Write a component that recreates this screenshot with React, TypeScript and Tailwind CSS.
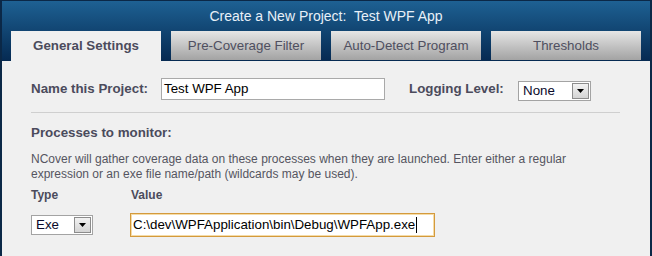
import React from "react";

const font = "font-['Liberation_Sans',Arial,sans-serif]";

const tabs = ["General Settings", "Pre-Coverage Filter", "Auto-Detect Program", "Thresholds"];

const SelectBox = ({ value, width }: { value: string; width: string }) => (
    <div
        className={`flex items-center ${width} h-[20px] bg-white border border-[#a3a3a3] pl-[4px] pr-[1px]`}
    >
        <span className="flex-1 text-[13.33px] leading-none text-[#0a0a2a]">{value}</span>
        <span className="flex items-center justify-center w-[17px] h-[16px] border border-[#8c8c8c] bg-gradient-to-b from-[#f2f2f2] to-[#d4d4d4]">
            <svg width="7" height="4" viewBox="0 0 7 4">
                <path d="M0 0h7L3.5 4z" fill="#000" />
            </svg>
        </span>
    </div>
);

export default function App() {
    return (
        <div
            className={`${font} w-[652px] h-[256px] flex flex-col overflow-hidden border-x-2 border-t border-[#0b2847] bg-[#f0f0f0]`}
        >
            {/* header with title and tabs */}
            <div className="flex flex-col h-[60px] bg-gradient-to-b from-[#1e6193] to-[#062a52]">
                <div className="pt-[7px] text-center text-[14px] leading-[16px] text-[#e8f0f8]">
                    Create a New Project:&nbsp; Test WPF App
                </div>
                <div className="flex items-end gap-[10px] pl-[9px] mt-auto">
                    {tabs.map((t, i) =>
                        i === 0 ? (
                            <div
                                key={t}
                                className="w-[150px] h-[30px] flex items-center justify-center bg-[#f0f0f0] text-[13.33px] font-bold text-[#4b4b5c]"
                            >
                                {t}
                            </div>
                        ) : (
                            <div
                                key={t}
                                className="w-[150px] h-[29px] mb-[1px] flex items-center justify-center bg-gradient-to-b from-[#e6e6e6] to-[#a3a3a3] text-[13.33px] text-[#4f4f60]"
                            >
                                {t}
                            </div>
                        )
                    )}
                </div>
            </div>

            {/* body */}
            <div className="flex flex-col pl-[29px] pr-[30px] pt-[17px] text-[#4b4b5c]">
                <div className="flex items-center h-[22px]">
                    <span className="w-[130px] text-[13.33px] font-bold">Name this Project:</span>
                    <div className="w-[224px] h-[22px] flex items-center bg-white border border-[#a9a9a9] pl-[2px] text-[13.33px] text-black">
                        Test WPF App
                    </div>
                    <span className="ml-[24px] w-[109px] text-[13.33px] font-bold">Logging Level:</span>
                    <div className="mt-[3px]">
                        <SelectBox value="None" width="w-[73px]" />
                    </div>
                </div>

                <div className="mt-[12px] h-px bg-[#cfcfcf]" />

                <div className="mt-[12px] text-[13.33px] leading-[16px] font-bold">Processes to monitor:</div>

                <p className="mt-[11px] text-[12px] leading-[15px] text-[#555560]">
                    NCover will gather coverage data on these processes when they are launched. Enter either a regular
                    <br />
                    expression or an exe file name/path (wildcards may be used).
                </p>

                <div className="mt-[6px] flex text-[12px] leading-[15px] font-bold">
                    <span className="w-[100px]">Type</span>
                    <span>Value</span>
                </div>

                <div className="mt-[10px] flex items-center">
                    <div className="w-[99px]">
                        <SelectBox value="Exe" width="w-[62px]" />
                    </div>
                    <div className="w-[305px] h-[24px] flex items-center bg-white border border-[#d49a3c] shadow-[inset_0_0_0_1px_#f5dca8] pl-[2px] text-[13.33px] text-black">
                        C:\dev\WPFApplication\bin\Debug\WPFApp.exe
                        <span className="ml-px w-px h-[16px] bg-black" />
                    </div>
                </div>
            </div>
        </div>
    );
}
